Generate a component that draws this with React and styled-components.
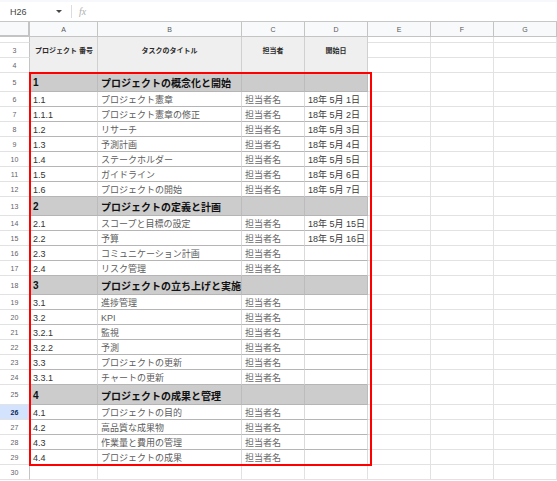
import React from 'react';
import styled, { createGlobalStyle } from 'styled-components';

const FONT = '"Liberation Sans", Arial, "Noto Sans CJK JP", sans-serif';

const COLUMNS = [
  { key: 'A', width: 68 },
  { key: 'B', width: 144 },
  { key: 'C', width: 63 },
  { key: 'D', width: 63 },
  { key: 'E', width: 63 },
  { key: 'F', width: 63 },
  { key: 'G', width: 63 }
];

const OWNER = '担当者名';

const SECTIONS = [
  {
    row: 5,
    no: '1',
    title: 'プロジェクトの概念化と開始',
    items: [
      ['1.1', 'プロジェクト憲章', OWNER, '18年 5月 1日'],
      ['1.1.1', 'プロジェクト憲章の修正', OWNER, '18年 5月 2日'],
      ['1.2', 'リサーチ', OWNER, '18年 5月 3日'],
      ['1.3', '予測計画', OWNER, '18年 5月 4日'],
      ['1.4', 'ステークホルダー', OWNER, '18年 5月 5日'],
      ['1.5', 'ガイドライン', OWNER, '18年 5月 6日'],
      ['1.6', 'プロジェクトの開始', OWNER, '18年 5月 7日']
    ]
  },
  {
    row: 13,
    no: '2',
    title: 'プロジェクトの定義と計画',
    items: [
      ['2.1', 'スコープと目標の設定', OWNER, '18年 5月 15日'],
      ['2.2', '予算', OWNER, '18年 5月 16日'],
      ['2.3', 'コミュニケーション計画', OWNER, ''],
      ['2.4', 'リスク管理', OWNER, '']
    ]
  },
  {
    row: 18,
    no: '3',
    title: 'プロジェクトの立ち上げと実施',
    items: [
      ['3.1', '進捗管理', OWNER, ''],
      ['3.2', 'KPI', OWNER, ''],
      ['3.2.1', '監視', OWNER, ''],
      ['3.2.2', '予測', OWNER, ''],
      ['3.3', 'プロジェクトの更新', OWNER, ''],
      ['3.3.1', 'チャートの更新', OWNER, '']
    ]
  },
  {
    row: 25,
    no: '4',
    title: 'プロジェクトの成果と管理',
    items: [
      ['4.1', 'プロジェクトの目的', OWNER, ''],
      ['4.2', '高品質な成果物', OWNER, ''],
      ['4.3', '作業量と費用の管理', OWNER, ''],
      ['4.4', 'プロジェクトの成果', OWNER, '']
    ]
  }
];

const SELECTED_ROW = 26;

const TEXT_COLORS = ['#333333', '#5c5c5c', '#6a6a6a', '#3a3a3a'];

const GlobalStyle = createGlobalStyle`
  html, body {
    margin: 0;
    padding: 0;
    background: #ffffff;
    overflow: hidden;
  }
  body {
    font-family: ${FONT};
  }
  * {
    box-sizing: border-box;
  }
`;

const Sheet = styled.div`
  width: 557px;
  height: 481px;
  overflow: hidden;
  background: #ffffff;
`;

const FormulaBar = styled.div`
  display: flex;
  align-items: center;
  height: 22px;
  border-top: 2px solid #f6f8fc;
  border-bottom: 1px solid #c7c7c7;
`;

const NameBox = styled.div`
  display: flex;
  align-items: center;
  justify-content: space-between;
  width: 66px;
  padding: 0 4px 0 10px;
  font-size: 9px;
  color: #444746;
`;

const Caret = styled.span`
  width: 0;
  height: 0;
  border-left: 3px solid transparent;
  border-right: 3px solid transparent;
  border-top: 3px solid #444746;
`;

const Divider = styled.span`
  width: 1px;
  height: 13px;
  margin: 0 7px 0 5px;
  background: #dadce0;
`;

const FxLabel = styled.span`
  font-family: "Liberation Serif", serif;
  font-style: italic;
  font-size: 10px;
  color: #b0b0b0;
`;

const Row = styled.div`
  display: flex;
  height: ${p => p.$height}px;
`;

const Corner = styled.div`
  width: 30px;
  background: #f8f9fa;
  border-right: 2px solid #c4c4c4;
  border-bottom: 2px solid #c4c4c4;
`;

const ColumnLetter = styled.div`
  display: flex;
  align-items: center;
  justify-content: center;
  width: ${p => p.$width}px;
  background: #f8f9fa;
  border-right: 1px solid #c4c4c4;
  border-bottom: 1px solid #c4c4c4;
  font-size: 7px;
  color: #575757;
`;

const RowHead = styled.div`
  display: flex;
  align-items: center;
  justify-content: center;
  width: 30px;
  height: ${p => p.$height}px;
  flex: 0 0 auto;
  background: ${p => (p.$selected ? '#d3e3fd' : '#ffffff')};
  border-right: 1px solid #c4c4c4;
  border-bottom: 1px solid #e2e2e2;
  font-size: 7px;
  font-weight: ${p => (p.$selected ? 700 : 400)};
  color: ${p => (p.$selected ? '#0b2a5c' : '#5f6368')};
`;

const Stack = styled.div`
  display: flex;
  flex-direction: column;
  width: ${p => p.$width}px;
`;

const HeaderCell = styled.div`
  width: ${p => p.$width}px;
  height: 36px;
  padding: 6px 2px 0 ${p => (p.$left ? 5 : 2)}px;
  background: #efefef;
  border-right: 1px solid #d0d0d0;
  border-bottom: 1px solid #bdbdbd;
  font-size: 7px;
  line-height: 15px;
  font-weight: 700;
  color: #2b2b2b;
  text-align: ${p => (p.$left ? 'left' : 'center')};
  white-space: nowrap;
`;

const BlankCell = styled.div`
  width: ${p => p.$width}px;
  height: ${p => p.$height}px;
  border-right: 1px solid #e2e2e2;
  border-bottom: 1px solid #e2e2e2;
`;

const Cell = styled.div`
  display: flex;
  align-items: center;
  width: ${p => p.$width}px;
  padding: 1px 3px 0;
  background: ${p => (p.$section ? '#cccccc' : '#ffffff')};
  border-right: 1px solid ${p => (p.$section ? '#bcbcbc' : '#dadada')};
  border-bottom: 1px solid #b5b5b5;
  font-size: ${p => (p.$section ? 10 : 9)}px;
  font-weight: ${p => (p.$section ? 700 : 400)};
  color: ${p => p.$color};
  white-space: nowrap;
  overflow: hidden;
`;

const DataBlock = styled.div`
  position: relative;

  &::after {
    content: '';
    position: absolute;
    left: 29px;
    top: -1px;
    bottom: -1px;
    width: 339px;
    border: 2px solid #ff0000;
    pointer-events: none;
  }
`;

function SheetRow({ num, height, cells, section }) {
  return (
    <Row $height={height}>
      <RowHead $height={height} $selected={num === SELECTED_ROW}>{num}</RowHead>
      {COLUMNS.map((col, i) => (
        i < 4 ? (
          <Cell
              key={col.key}
              $width={col.width}
              $section={section}
              $color={section ? '#111111' : TEXT_COLORS[i]}>
            {cells[i]}
          </Cell>
        ) : (
          <BlankCell key={col.key} $width={col.width} $height={height} />
        )
      ))}
    </Row>
  );
}

export default function App() {
  const rows = [];
  SECTIONS.forEach((section) => {
    rows.push(
      <SheetRow
          key={section.row}
          num={section.row}
          height={section.row === 25 ? 20 : 19}
          section
          cells={[section.no, section.title, '', '']} />
    );
    section.items.forEach((item, i) => {
      const num = section.row + i + 1;
      rows.push(<SheetRow key={num} num={num} height={15} cells={item} />);
    });
  });

  return (
    <Sheet>
      <GlobalStyle />
      <FormulaBar>
        <NameBox>
          <span>H26</span>
          <Caret />
        </NameBox>
        <Divider />
        <FxLabel>fx</FxLabel>
      </FormulaBar>

      <Row $height={15}>
        <Corner />
        {COLUMNS.map(col => (
          <ColumnLetter key={col.key} $width={col.width}>{col.key}</ColumnLetter>
        ))}
      </Row>

      <Row $height={36}>
        <Stack $width={30}>
          <RowHead $height={6} />
          <RowHead $height={15}>3</RowHead>
          <RowHead $height={15}>4</RowHead>
        </Stack>
        <HeaderCell $width={68} $left>プロジェクト 番号</HeaderCell>
        <HeaderCell $width={144}>タスクのタイトル</HeaderCell>
        <HeaderCell $width={63}>担当者</HeaderCell>
        <HeaderCell $width={63}>開始日</HeaderCell>
        {COLUMNS.slice(4).map(col => (
          <Stack key={col.key} $width={col.width}>
            <BlankCell $width={col.width} $height={6} />
            <BlankCell $width={col.width} $height={15} />
            <BlankCell $width={col.width} $height={15} />
          </Stack>
        ))}
      </Row>

      <DataBlock>{rows}</DataBlock>

      <Row $height={15}>
        <RowHead $height={15}>30</RowHead>
        {COLUMNS.map(col => (
          <BlankCell key={col.key} $width={col.width} $height={15} />
        ))}
      </Row>
    </Sheet>
  );
}
